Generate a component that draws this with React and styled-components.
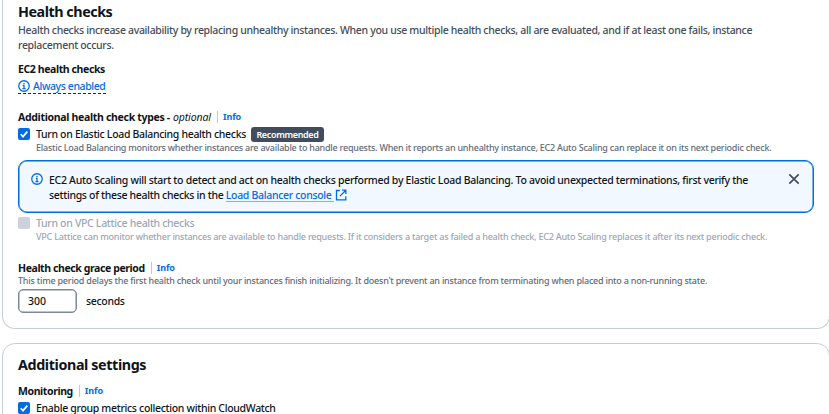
import React, { useState } from "react";
import styled, { createGlobalStyle } from "styled-components";

const InfoIcon = () => (
  <IconSvg viewBox="0 0 16 16">
    <circle cx="8" cy="8" r="7" />
    <path d="M8 11.4V7.3H6.4M6 11.4h4M8 4v1.7" />
  </IconSvg>
);

const ExternalIcon = () => (
  <IconSvg viewBox="0 0 16 16">
    <path d="M6.5 2H2v12.4h12.4V9.5M9.5 1.6h5v5M14.2 1.9L6.6 9.5" />
  </IconSvg>
);

const CloseIcon = () => (
  <IconSvg viewBox="0 0 12 12">
    <path d="M1.3 1.3l9.4 9.4M10.7 1.3L1.3 10.7" />
  </IconSvg>
);

const Checkbox = ({ checked, disabled }) => (
  <Box $disabled={disabled}>
    {checked && (
      <svg viewBox="0 0 12 12" width="12" height="12">
        <path d="M2.8 6.2l2.2 2.4 4.3-5" fill="none" stroke="#fff" strokeWidth="1.7" />
      </svg>
    )}
  </Box>
);

const FieldLabel = ({ children, optional }) => (
  <LabelRow>
    <Label $spacing={optional ? "-0.31px" : undefined}>{children}</Label>
    {optional && <Optional>optional</Optional>}
    <Divider />
    <InfoLink>Info</InfoLink>
  </LabelRow>
);

const App = () => {
  const [seconds, setSeconds] = useState("300");

  return (
    <Page>
      <GlobalStyle />
      <HealthCard>
        <Title $spacing="-0.45px">Health checks</Title>
        <Description>
          Health checks increase availability by replacing unhealthy instances. When you use multiple health checks, all are evaluated, and if at least one fails, instance
          <br />
          replacement occurs.
        </Description>

        <Ec2Field>
          <Label>EC2 health checks</Label>
          <Status>
            <InfoIcon />
            <span>Always enabled</span>
          </Status>
        </Ec2Field>

        <TypesField>
          <FieldLabel optional>Additional health check types -</FieldLabel>
          <CheckRow>
            <Checkbox checked />
            <CheckText>Turn on Elastic Load Balancing health checks</CheckText>
            <Badge>Recommended</Badge>
          </CheckRow>
          <CheckHint>
            Elastic Load Balancing monitors whether instances are available to handle requests. When it reports an unhealthy instance, EC2 Auto Scaling can replace it on its next periodic check.
          </CheckHint>
        </TypesField>

        <Alert>
          <InfoIcon />
          <AlertText>
            <p>
              EC2 Auto Scaling will start to detect and act on health checks performed by Elastic Load Balancing. To avoid unexpected terminations, first verify the
            </p>
            <p>
              settings of these health checks in the{" "}
              <AlertLink>
                <span>Load Balancer console</span>
                <ExternalIcon />
              </AlertLink>
            </p>
          </AlertText>
          <CloseButton aria-label="Close">
            <CloseIcon />
          </CloseButton>
        </Alert>

        <CheckRow>
          <Checkbox disabled />
          <CheckText $disabled>Turn on VPC Lattice health checks</CheckText>
        </CheckRow>
        <CheckHint $disabled>
          VPC Lattice can monitor whether instances are available to handle requests. If it considers a target as failed a health check, EC2 Auto Scaling replaces it after its next periodic check.
        </CheckHint>

        <GraceField>
          <FieldLabel>Health check grace period</FieldLabel>
          <Hint>
            This time period delays the first health check until your instances finish initializing. It doesn't prevent an instance from terminating when placed into a non-running state.
          </Hint>
          <InputRow>
            <Input value={seconds} onChange={(e) => setSeconds(e.target.value)} />
            <span>seconds</span>
          </InputRow>
        </GraceField>
      </HealthCard>

      <SettingsCard>
        <Title>Additional settings</Title>
        <MonitoringField>
          <FieldLabel>Monitoring</FieldLabel>
          <CheckRow>
            <Checkbox checked />
            <CheckText>Enable group metrics collection within CloudWatch</CheckText>
          </CheckRow>
        </MonitoringField>
      </SettingsCard>
    </Page>
  );
};

export default App;

const GlobalStyle = createGlobalStyle`
  * {
    box-sizing: border-box;
  }
  body {
    margin: 0;
    overflow: hidden;
    background: #fff;
    color: #0f141a;
    font-family: "Noto Sans", "Open Sans", sans-serif;
    font-size: 10.5px;
    font-weight: 500;
    letter-spacing: -0.32px;
  }
`;

const Page = styled.div`
  display: flex;
  flex-direction: column;
  gap: 14px;
  height: 414px;
  padding-left: 2px;
  overflow: hidden;
  white-space: nowrap;
`;

const Card = styled.section`
  flex-shrink: 0;
  width: 828px;
  padding: 0 15px;
  border: 1px solid #c6cdda;
  background: #fff;
`;

const HealthCard = styled(Card)`
  height: 329px;
  padding-top: 2px;
  border-top: 0;
  border-radius: 0 0 13px 13px;
`;

const SettingsCard = styled(Card)`
  height: 120px;
  padding-top: 11px;
  border-radius: 13px;
`;

const Title = styled.h2`
  margin: 0;
  font-size: 14.3px;
  font-weight: 700;
  line-height: 20px;
  letter-spacing: ${({ $spacing }) => $spacing || "-0.38px"};
`;

const Description = styled.p`
  margin: 0;
  padding-top: 1px;
  color: #414d5c;
  line-height: 15px;
`;

const Ec2Field = styled.div`
  margin-top: 9px;
`;

const TypesField = styled.div`
  margin-top: 16px;
`;

const GraceField = styled.div`
  margin-top: 19px;
`;

const MonitoringField = styled.div`
  margin-top: 9px;
`;

const LabelRow = styled.div`
  display: flex;
  align-items: center;
  height: 14px;
`;

const Label = styled.div`
  font-size: 10.5px;
  font-weight: 700;
  line-height: 14px;
  letter-spacing: ${({ $spacing }) => $spacing || "-0.4px"};
`;

const Optional = styled.i`
  margin-left: 3px;
  font-weight: 400;
  line-height: 14px;
  letter-spacing: -0.1px;
`;

const Divider = styled.span`
  width: 1px;
  height: 12px;
  margin: 0 5px 0 6px;
  background: #c6c6cd;
`;

const InfoLink = styled.a`
  color: #006ce0;
  font-size: 9px;
  font-weight: 700;
  line-height: 14px;
  letter-spacing: -0.1px;
`;

const IconSvg = styled.svg`
  flex-shrink: 0;
  width: 12px;
  height: 12px;
  fill: none;
  stroke: currentColor;
  stroke-width: 1.7;
`;

const Status = styled.div`
  display: flex;
  align-items: center;
  gap: 3px;
  width: 88px;
  height: 18px;
  padding-top: 2px;
  border-bottom: 1px dashed #232b37;
  color: #006ce0;
  letter-spacing: -0.4px;
`;

const CheckRow = styled.div`
  display: flex;
  align-items: center;
  height: 20px;
`;

const Box = styled.span`
  display: flex;
  width: 12px;
  height: 12px;
  border-radius: 2px;
  background: ${({ $disabled }) => ($disabled ? "#ced1da" : "#006ce0")};
`;

const CheckText = styled.span`
  margin-left: 6px;
  color: ${({ $disabled }) => ($disabled ? "#9ba7b6" : "#0f141a")};
`;

const Badge = styled.span`
  width: 73px;
  height: 15px;
  margin-left: 5px;
  border-radius: 3px;
  background: #414d5c;
  color: #fff;
  font-size: 9px;
  font-weight: 600;
  line-height: 15px;
  letter-spacing: -0.35px;
  text-align: center;
`;

const Hint = styled.p`
  margin: 0;
  color: #5f6b7a;
  font-size: 9px;
  line-height: 11px;
  letter-spacing: -0.225px;
`;

const CheckHint = styled(Hint)`
  margin: -2px 0 0 18px;
  color: ${({ $disabled }) => ($disabled ? "#9ba7b6" : "#5f6b7a")};
  letter-spacing: ${({ $disabled }) => ($disabled ? "-0.222px" : "-0.232px")};
`;

const Alert = styled.div`
  display: flex;
  align-items: flex-start;
  width: 796px;
  height: 53px;
  margin: 7px 0 0;
  padding: 12px 13px 0 12px;
  border: 1px solid #006ce0;
  border-radius: 9px;
  background: #f2f8ff;
  box-shadow: inset 0 0 0 0.5px #006ce0;

  > svg {
    color: #006ce0;
  }
`;

const AlertText = styled.div`
  margin-right: auto;
  margin-left: 6px;
  letter-spacing: -0.285px;

  p {
    margin: 0;
    line-height: 15px;
  }
  p + p {
    letter-spacing: -0.32px;
  }
`;

const AlertLink = styled.a`
  color: #006ce0;

  span {
    padding-right: 2px;
    box-shadow: inset 0 -1px #7db3ee;
  }
  svg {
    margin-left: 1px;
    vertical-align: -2px;
  }
`;

const CloseButton = styled.button`
  display: flex;
  padding: 0;
  border: 0;
  background: none;
  color: #414d5c;
`;

const InputRow = styled.div`
  display: flex;
  align-items: center;
  gap: 9px;
  margin-top: 3px;
`;

const Input = styled.input`
  width: 59px;
  height: 24px;
  padding: 0 9px;
  border: 1px solid #7d8998;
  border-radius: 5px;
  box-shadow: inset 0 0 0 0.5px #7d8998;
  color: inherit;
  font: inherit;
`;
